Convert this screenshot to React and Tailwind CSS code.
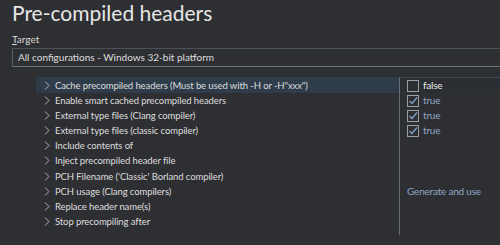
import React from "react";

const rows = [
  { label: 'Cache precompiled headers (Must be used with -H or -H"xxx")', value: "false", check: false, selected: true },
  { label: "Enable smart cached precompiled headers", value: "true", check: true },
  { label: "External type files (Clang compiler)", value: "true", check: true },
  { label: "External type files (classic compiler)", value: "true", check: true },
  { label: "Include contents of" },
  { label: "Inject precompiled header file" },
  { label: "PCH Filename ('Classic' Borland compiler)" },
  { label: "PCH usage (Clang compilers)", value: "Generate and use" },
  { label: "Replace header name(s)" },
  { label: "Stop precompiling after" },
];

function Chevron() {
  return (
    <svg width="6" height="9" viewBox="0 0 6 9" className="shrink-0">
      <path d="M1 0.5 L5 4.5 L1 8.5" fill="none" stroke="#b0b0b0" strokeWidth="1" />
    </svg>
  );
}

function Box({ checked }) {
  return (
    <span className="w-[12px] h-[12px] border border-[#9aa0a6] flex items-center justify-center shrink-0">
      {checked && (
        <svg width="10" height="10" viewBox="0 0 10 10">
          <path d="M1.5 5 L4 7.5 L9 1.5" fill="none" stroke="#7fa6cc" strokeWidth="1.2" />
        </svg>
      )}
    </span>
  );
}

export default function App() {
  return (
    <div className="w-[500px] h-[245px] bg-[#2e2f33] text-[#dedede] overflow-hidden" style={{ fontFamily: 'Lato, "Noto Sans", sans-serif' }}>
      <div className="pl-[12px]">
        <h1 className="text-[21px] leading-[26px] font-normal text-[#e6e6e6]">Pre-compiled headers</h1>
        <div className="text-[10px] leading-[14px] mt-[6px] text-[#d8d8d8]"><span className="underline">T</span>arget</div>
        <div className="mt-[2px] h-[19px] border border-r-0 border-t-[#4c5157] border-l-[#5a6068] border-b-[#6a7480] flex items-center pl-[5px] text-[10px]">
          All configurations - Windows 32-bit platform
        </div>
      </div>
      <div className="mt-[9px] flex">
        <div className="w-[36px] shrink-0" />
        <div className="flex-1">
          {rows.map((r, i) => (
            <div key={i} className={`flex text-[9.5px] leading-[15px] tracking-[-0.1px] ${i === 0 ? "h-[17px] pt-[1px]" : "h-[15.1px]"}`}>
              <div className={`w-[363px] flex items-center gap-[5px] pl-[8px] whitespace-nowrap overflow-hidden ${r.selected ? "bg-[#2f3d4b]" : ""}`}>
                <Chevron />
                <span>{r.label}</span>
              </div>
              <div className={`flex-1 border-l border-[#6a6d72] flex items-center gap-[4px] pl-[7px] text-[10px] tracking-[-0.2px] ${r.selected ? "bg-[#2b2e33] border-t border-t-[#3d4a57]" : ""}`}>
                {r.check !== undefined && <Box checked={r.check} />}
                {r.value && <span className={r.value === "false" ? "text-[#e8e8e8]" : "text-[#8fa6c2]"}>{r.value}</span>}
              </div>
            </div>
          ))}
          <div className="flex h-[6px]">
            <div className="w-[363px]" />
            <div className="border-l border-[#6a6d72]" />
          </div>
        </div>
      </div>
    </div>
  );
}
